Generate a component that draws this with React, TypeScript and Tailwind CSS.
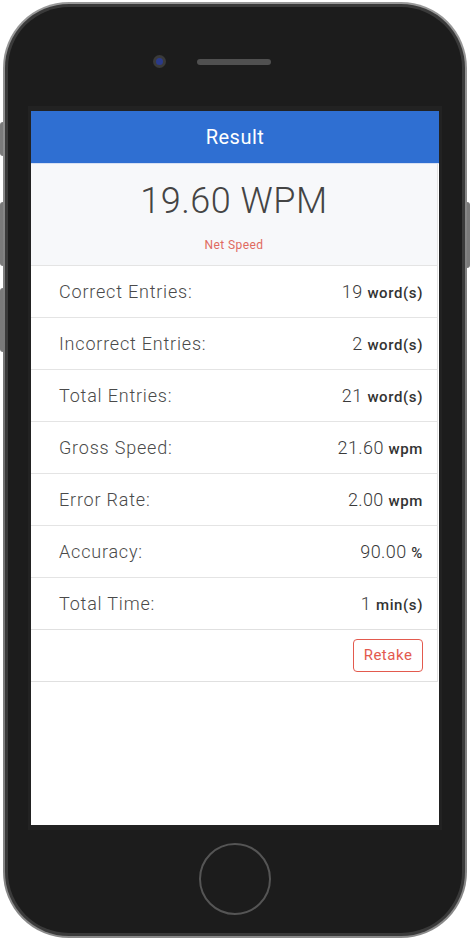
import React from "react";

const rows = [
  { label: "Correct Entries:", value: "19", unit: "word(s)" },
  { label: "Incorrect Entries:", value: "2", unit: "word(s)" },
  { label: "Total Entries:", value: "21", unit: "word(s)" },
  { label: "Gross Speed:", value: "21.60", unit: "wpm" },
  { label: "Error Rate:", value: "2.00", unit: "wpm" },
  { label: "Accuracy:", value: "90.00", unit: "%" },
  { label: "Total Time:", value: "1", unit: "min(s)" },
];

const font = { fontFamily: "Roboto, 'Noto Sans', sans-serif" };

const App = () => {
  return (
    <div className="h-[940px] w-[470px] bg-white pt-[2px]" style={font}>
      <div className="relative mx-auto h-[936px] w-[464px] rounded-[66px] bg-gradient-to-b from-[#9a9a9a] via-[#6e6e6e] to-[#8a8a8a] p-[2px]">
        {/* side buttons */}
        <div className="absolute left-[-3px] top-[120px] h-[34px] w-[3px] rounded-l bg-[#7a7a7a]" />
        <div className="absolute left-[-3px] top-[200px] h-[64px] w-[3px] rounded-l bg-[#7a7a7a]" />
        <div className="absolute left-[-3px] top-[286px] h-[64px] w-[3px] rounded-l bg-[#7a7a7a]" />
        <div className="absolute right-[-3px] top-[200px] h-[66px] w-[3px] rounded-r bg-[#7a7a7a]" />

        <div className="h-full w-full rounded-[64px] bg-[#3a3a3a] p-[3px]">
          <div className="flex h-full w-full flex-col items-center rounded-[61px] bg-[#1c1c1c]">
            {/* top: camera + speaker */}
            <div className="flex h-[99px] items-center gap-[31px] pr-[46px] pt-[10px]">
              <div className="flex h-[13px] w-[13px] items-center justify-center rounded-full bg-[#3a3a3a]">
                <div className="h-[7px] w-[7px] rounded-full bg-[#2a3a8a]" />
              </div>
              <div className="h-[6px] w-[74px] rounded-full bg-[#505050]" />
            </div>

            {/* screen bezel */}
            <div className="flex h-[724px] w-[414px] items-center justify-center bg-[#222222]">
              <div className="flex h-[714px] w-[408px] flex-col bg-white">
                <div className="flex h-[53px] items-center justify-center border-b border-[#d6e0f3] bg-[#2f6fd2] text-[20px] tracking-[0.5px] text-white">
                  Result
                </div>
                <div className="mr-[1px] flex flex-col border-r border-[#e2e2e2]">
                  <div className="flex h-[101px] flex-col items-center bg-[#f7f8fa]">
                    <div className="mt-[10px] text-[36px] font-light tracking-[0.5px] text-[#444]">
                      19.60 WPM
                    </div>
                    <div className="mt-[8px] text-[12px] tracking-[0.4px] text-[#e06a5f]">Net Speed</div>
                  </div>
                  {rows.map((row) => (
                    <div
                      key={row.label}
                      className="flex h-[52px] items-center justify-between border-t border-[#e4e4e4] pl-[28px] pr-[14px]"
                    >
                      <span className="text-[18px] font-light tracking-[0.8px] text-[#4a4a4a]">{row.label}</span>
                      <span className="text-[18px] font-light tracking-[0.4px] text-[#3a3a3a]">
                        {row.value}{" "}
                        <span className="text-[15px] font-medium tracking-[0.6px] text-[#333]">{row.unit}</span>
                      </span>
                    </div>
                  ))}
                  <div className="flex h-[53px] items-center justify-end border-y border-[#e0e0e0] pr-[14px]">
                    <button className="h-[33px] w-[70px] rounded-[4px] border border-[#e35a4e] text-[15px] tracking-[0.5px] text-[#e35a4e]">
                      Retake
                    </button>
                  </div>
                </div>
              </div>
            </div>

            {/* home button */}
            <div className="flex flex-1 items-center justify-center pb-[6px]">
              <div className="h-[72px] w-[72px] rounded-full border-2 border-[#555]" />
            </div>
          </div>
        </div>
      </div>
    </div>
  );
};

export default App;
